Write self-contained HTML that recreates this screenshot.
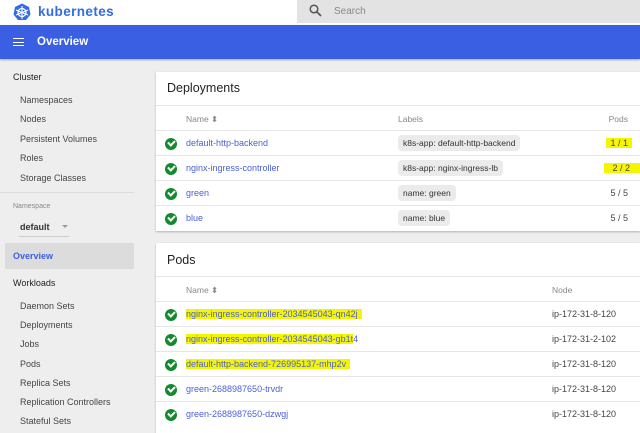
<!DOCTYPE html>
<html><head><style>
*{margin:0;padding:0;box-sizing:border-box}
body{width:640px;height:425px;overflow:hidden;background:#eeeeee;font-family:"Liberation Sans",sans-serif;position:relative;font-size:9px;color:#333}
.a{position:absolute;white-space:nowrap}
.top{left:0;top:0;width:640px;height:25px;background:#fff}
.search{left:297px;top:0;width:343px;height:23px;background:#e3e3e3}
.blue{left:0;top:25px;width:640px;height:34px;background:#3a5fe3;box-shadow:0 1px 2px rgba(0,0,0,.3)}
.side{font-size:9px;color:#444}
.card{background:#fff;left:156px;width:484px;box-shadow:0 1px 2px rgba(0,0,0,.25)}
.row{position:absolute;left:0;width:484px;border-top:1px solid #e6e6e6;height:25px}
.chk{position:absolute;left:9px;top:7px;width:12px;height:12px;border-radius:50%;background:#138a2e}
.chk:after{content:"";position:absolute;left:3px;top:2px;width:5px;height:3px;border-left:2px solid #fff;border-bottom:2px solid #fff;transform:rotate(-45deg)}
.nm{position:absolute;left:30px;top:7px;color:#4a5fd8;font-size:9px}
.lb{position:absolute;left:242px;top:4px;background:#ebebeb;border-radius:4px;padding:3px 5px;font-size:8.5px;color:#333}
.pd{position:absolute;right:12px;top:7px;font-size:9px;color:#444}
.hl{background:#f5f500}
.nd{position:absolute;left:396px;top:7px;color:#444}
.hdr{position:absolute;top:0;color:#888;font-size:8.5px}
</style></head><body>
<div class="a top"></div>
<svg class="a" style="left:13px;top:3px" width="18" height="18" viewBox="0 0 18 18"><polygon points="9,0.5 16,4 17.5,11.5 13,17 5,17 0.5,11.5 2,4" fill="#326ce5"/><circle cx="9" cy="9.5" r="4" fill="none" stroke="#fff" stroke-width="1.3"/><g stroke="#fff" stroke-width="1.1"><line x1="9" y1="3" x2="9" y2="16"/><line x1="3" y1="7" x2="15" y2="12"/><line x1="15" y1="7" x2="3" y2="12"/></g></svg>
<div class="a" style="left:38px;top:4px;font-size:13.5px;color:#326ce5;font-weight:bold;letter-spacing:0.4px">kubernetes</div>
<div class="a search"></div>
<svg class="a" style="left:309px;top:4px" width="13" height="13" viewBox="0 0 13 13"><circle cx="5" cy="5" r="3.8" fill="none" stroke="#555" stroke-width="1.5"/><line x1="8" y1="8" x2="12" y2="12" stroke="#555" stroke-width="1.6"/></svg>
<div class="a" style="left:334px;top:6px;font-size:10px;color:#888">Search</div>
<div class="a blue"></div>
<div class="a" style="left:13px;top:38px;width:11px;height:8px;border-top:1.6px solid #fff;border-bottom:1.6px solid #fff"></div>
<div class="a" style="left:13px;top:41.5px;width:11px;height:1.6px;background:#fff"></div>
<div class="a" style="left:37px;top:36px;font-size:11.5px;color:#fff;font-weight:bold">Overview</div>

<div class="a side" style="left:13px;top:72px;color:#222">Cluster</div>
<div class="a side" style="left:20px;top:95px">Namespaces</div>
<div class="a side" style="left:20px;top:114px">Nodes</div>
<div class="a side" style="left:20px;top:134px">Persistent Volumes</div>
<div class="a side" style="left:20px;top:153px">Roles</div>
<div class="a side" style="left:20px;top:173px">Storage Classes</div>
<div class="a" style="left:0;top:192px;width:134px;height:1px;background:#ddd"></div>
<div class="a" style="left:13px;top:203px;font-size:7px;color:#888">Namespace</div>
<div class="a" style="left:20px;top:222px;font-size:9px;font-weight:bold;color:#333">default</div>
<div class="a" style="left:62px;top:225px;border-left:3px solid transparent;border-right:3px solid transparent;border-top:3px solid #999"></div>
<div class="a" style="left:19px;top:236px;width:50px;height:1px;background:#ccc"></div>
<div class="a" style="left:5px;top:243px;width:129px;height:26px;background:#dcdcdc"></div>
<div class="a" style="left:13px;top:251px;font-size:9px;color:#3a5fe3;font-weight:bold">Overview</div>
<div class="a side" style="left:13px;top:278px;color:#222">Workloads</div>
<div class="a side" style="left:20px;top:301px">Daemon Sets</div>
<div class="a side" style="left:20px;top:320px">Deployments</div>
<div class="a side" style="left:20px;top:339px">Jobs</div>
<div class="a side" style="left:20px;top:359px">Pods</div>
<div class="a side" style="left:20px;top:378px">Replica Sets</div>
<div class="a side" style="left:20px;top:397px">Replication Controllers</div>
<div class="a side" style="left:20px;top:416px">Stateful Sets</div>

<div class="a card" style="top:72px;height:159px">
 <div class="a" style="left:11px;top:9px;font-size:12.5px;color:#222">Deployments</div>
 <div class="row" style="top:33px;height:25px">
  <div class="hdr" style="left:30px;top:8px">Name ⬍</div>
  <div class="hdr" style="left:242px;top:8px">Labels</div>
  <div class="hdr" style="right:12px;top:8px">Pods</div>
 </div>
 <div class="row" style="top:58px"><div class="chk"></div><div class="nm">default-http-backend</div><div class="lb">k8s-app: default-http-backend</div><div class="pd hl" style="right:8px;padding:0 4px">1 / 1</div></div>
 <div class="row" style="top:83px"><div class="chk"></div><div class="nm">nginx-ingress-controller</div><div class="lb">k8s-app: nginx-ingress-lb</div><div class="pd hl" style="right:0;padding:0 10px 0 8px">2 / 2</div></div>
 <div class="row" style="top:108px"><div class="chk"></div><div class="nm">green</div><div class="lb">name: green</div><div class="pd">5 / 5</div></div>
 <div class="row" style="top:133px"><div class="chk"></div><div class="nm">blue</div><div class="lb">name: blue</div><div class="pd">5 / 5</div></div>
</div>

<div class="a card" style="top:243px;height:190px">
 <div class="a" style="left:11px;top:10px;font-size:12.5px;color:#222">Pods</div>
 <div class="row" style="top:33px">
  <div class="hdr" style="left:30px;top:8px">Name ⬍</div>
  <div class="hdr" style="left:396px;top:8px">Node</div>
 </div>
 <div class="row" style="top:58px"><div class="chk"></div><div class="nm hl" style="padding-right:4px">nginx-ingress-controller-2034545043-qn42j</div><div class="nd">ip-172-31-8-120</div></div>
 <div class="row" style="top:83px"><div class="chk"></div><div class="nm"><span class="hl">nginx-ingress-controller-2034545043-gb1t</span>4</div><div class="nd">ip-172-31-2-102</div></div>
 <div class="row" style="top:108px"><div class="chk"></div><div class="nm hl" style="padding-right:4px">default-http-backend-726995137-mhp2v</div><div class="nd">ip-172-31-8-120</div></div>
 <div class="row" style="top:133px"><div class="chk"></div><div class="nm">green-2688987650-trvdr</div><div class="nd">ip-172-31-8-120</div></div>
 <div class="row" style="top:158px"><div class="chk"></div><div class="nm">green-2688987650-dzwgj</div><div class="nd">ip-172-31-8-120</div></div>
</div>
</body></html>
